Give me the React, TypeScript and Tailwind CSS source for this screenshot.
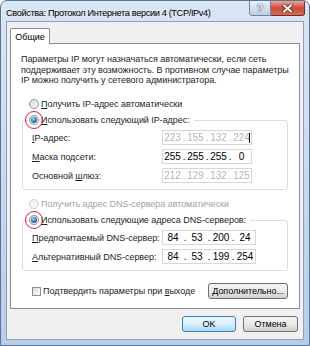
import { Fragment } from "react";

const FONT = "font-['Liberation_Sans',Arial,sans-serif]";

function Radio({ checked = false, disabled = false, marked = false }: { checked?: boolean; disabled?: boolean; marked?: boolean }) {
  return (
    <span className="relative flex items-center justify-center w-[10px] h-[10px] shrink-0">
      <span
        className={`flex items-center justify-center w-[10px] h-[10px] rounded-full border ${
          disabled
            ? "border-[#cfcfcf] bg-linear-to-br from-[#efefef] to-[#fbfbfb]"
            : "border-[#8a95a1] bg-linear-to-br from-[#d6d6d6] to-[#fdfdfd]"
        }`}
      >
        {checked && (
          <span className="w-[6px] h-[6px] rounded-full bg-[radial-gradient(circle_at_40%_35%,#a7dcf7,#2a6ea6_55%,#173f66)]" />
        )}
      </span>
      {marked && (
        <span className="absolute left-[-4px] top-[-4px] w-[18px] h-[18px] rounded-full border-[1.5px] border-[#d8262b]" />
      )}
    </span>
  );
}

function IpField({
  parts,
  width,
  cell,
  dot,
  blurred = false,
  caret = false,
}: {
  parts: string[];
  width: string;
  cell: string;
  dot: string;
  blurred?: boolean;
  caret?: boolean;
}) {
  return (
    <div className={`relative h-[15px] ${width} shrink-0 border border-[#d6d6d6] bg-white flex items-center px-[0.5px] text-[10px] leading-[13px]`}>
      <div className={`flex items-center ${blurred ? "text-[#b4b4b4] blur-[0.45px]" : "text-black"}`}>
        {parts.map((p, i) => (
          <Fragment key={i}>
            {i > 0 && <span className={`${dot} text-center`}>.</span>}
            <span className={`${cell} text-center`}>{p}</span>
          </Fragment>
        ))}
      </div>
      {caret && <span className="absolute right-[1px] top-[2px] w-px h-[10px] bg-black" />}
    </div>
  );
}

function Row({ label, children }: { label: React.ReactNode; children: React.ReactNode }) {
  return (
    <div className="flex items-center h-[15px]">
      <span className="w-[130px] shrink-0 whitespace-nowrap text-[#1e1e1e]">{label}</span>
      {children}
    </div>
  );
}

function Btn({ children, primary = false, width }: { children: React.ReactNode; primary?: boolean; width: string }) {
  return (
    <button
      className={`${width} h-[16px] shrink-0 rounded-[3px] border flex items-center justify-center text-[9px] leading-none text-black whitespace-nowrap ${
        primary
          ? "border-[#3c7fb1] bg-linear-to-b from-[#eaf6fd] via-[#d9f0fc] to-[#a7d9f5]"
          : "border-[#707070] bg-linear-to-b from-[#f2f2f2] via-[#ebebeb] to-[#cfcfcf]"
      }`}
    >
      {children}
    </button>
  );
}

export default function App() {
  return (
    <div
      className={`${FONT} w-[310px] h-[346px] flex flex-col border border-[#55759c] rounded-t-[7px] overflow-hidden bg-linear-to-b from-[#dbe6f3] via-[#c9daee] to-[#b9cde6] text-[9px] leading-[12px] tracking-[-0.05px]`}
    >
      {/* Title bar */}
      <div className="h-[20px] shrink-0 flex items-start justify-between pl-[5px] pr-[4px]">
        <span className="mt-[6px] text-[9.2px] leading-[12px] text-black whitespace-nowrap tracking-[-0.35px]">
          Свойства: Протокол Интернета версии 4 (TCP/IPv4)
        </span>
        <div className="flex -mt-px">
          <div className="w-[22px] h-[16px] rounded-bl-[3px] border border-[#6f85a3] bg-linear-to-b from-[#e9f0f8] via-[#d2dfee] to-[#bccee5] flex items-center justify-center">
            <span className="text-[11px] font-bold leading-none text-white [text-shadow:0_0_1px_#1f3250,0_0_1px_#1f3250]">?</span>
          </div>
          <div className="w-[34px] h-[16px] rounded-br-[3px] border border-l-0 border-[#7a2a22] bg-linear-to-b from-[#e8a596] via-[#c94a3c] to-[#d46a55] flex items-center justify-center">
            <svg width="11" height="9" viewBox="0 0 11 9">
              <path d="M2 1.5 L9 7.5 M9 1.5 L2 7.5" stroke="#5a1a14" strokeWidth="3.4" strokeLinecap="square" />
              <path d="M2 1.5 L9 7.5 M9 1.5 L2 7.5" stroke="#fff" strokeWidth="2" strokeLinecap="square" />
            </svg>
          </div>
        </div>
      </div>

      {/* Frame + client */}
      <div className="flex-1 flex px-[5px] pb-[5px]">
        <div className="flex-1 min-w-0 flex flex-col border border-[#8aa0bc] bg-[#f0f0f0]">
          {/* Tab strip */}
          <div className="pt-[6px] pl-[3px] flex">
            <div className="relative z-10 -mb-px w-[40px] h-[16px] border border-b-0 border-[#898c95] bg-white rounded-t-[2px] flex items-center justify-center text-black">
              Общие
            </div>
          </div>

          {/* Panel */}
          <div className="mx-[3px] min-w-0 border border-[#898c95] bg-white flex flex-col px-[11px] pt-[10px] pb-[9px] whitespace-nowrap">
            <p className="-ml-px leading-[10.5px] text-[#1e1e1e] h-[31.5px]">
              Параметры IP могут назначаться автоматически, если сеть
              <br />
              поддерживает эту возможность. В противном случае параметры
              <br />
              IP можно получить у сетевого администратора.
            </p>

            <div className="mt-[12.5px] h-[12px] flex items-center gap-[2px] ml-[7px] text-[#1e1e1e]">
              <Radio />
              <span>
                <u>П</u>олучить IP-адрес автоматически
              </span>
            </div>

            <fieldset className="mt-[4px] border border-[#d5dfe5] rounded-[3px] pl-[9px] pb-[6px]">
              <legend className="-ml-[4px] pl-[1px] pr-[4px] h-[12px] flex items-center gap-[2px] text-[#1e1e1e]">
                <Radio checked marked />
                <span>
                  <u>И</u>спользовать следующий IP-адрес:
                </span>
              </legend>
              <div className="pt-[4px] flex flex-col gap-[4px]">
                <Row label={<><u>I</u>P-адрес:</>}>
                  <IpField parts={["223", "155", "132", "224"]} width="w-[90px]" cell="w-[18px]" dot="w-[5px]" blurred caret />
                </Row>
                <Row label={<><u>М</u>аска подсети:</>}>
                  <IpField parts={["255", "255", "255", "0"]} width="w-[90px]" cell="w-[18px]" dot="w-[5px]" />
                </Row>
                <Row label={<>Основной <u>ш</u>люз:</>}>
                  <IpField parts={["212", "129", "132", "125"]} width="w-[90px]" cell="w-[18px]" dot="w-[5px]" blurred />
                </Row>
              </div>
            </fieldset>

            <div className="mt-[8px] h-[12px] flex items-center gap-[2px] ml-[7px] text-[#a3a3a3]">
              <Radio disabled />
              <span>Получить адрес DNS-сервера автоматически</span>
            </div>

            <fieldset className="mt-[4px] border border-[#d5dfe5] rounded-[3px] pl-[9px] pb-[6px]">
              <legend className="-ml-[4px] pl-[1px] pr-[4px] h-[12px] flex items-center gap-[2px] text-[#1e1e1e]">
                <Radio checked marked />
                <span>
                  <u>И</u>спользовать следующие адреса DNS-серверов:
                </span>
              </legend>
              <div className="pt-[4px] flex flex-col gap-[4px]">
                <Row label={<><u>П</u>редпочитаемый DNS-сервер:</>}>
                  <IpField parts={["84", "53", "200", "24"]} width="w-[94px]" cell="w-[19px]" dot="w-[5px]" />
                </Row>
                <Row label={<><u>А</u>льтернативный DNS-сервер:</>}>
                  <IpField parts={["84", "53", "199", "254"]} width="w-[94px]" cell="w-[19px]" dot="w-[5px]" />
                </Row>
              </div>
            </fieldset>

            <div className="mt-[12px] h-[16px] flex items-center justify-between ml-[10px]">
              <div className="flex items-center gap-[2px] text-[#1e1e1e]">
                <span className="w-[9px] h-[9px] border border-[#8f8f8f] bg-linear-to-br from-[#dcdcdc] to-[#fbfbfb]" />
                <span>
                  Подтвердить параметры при <u>в</u>ыходе
                </span>
              </div>
              <Btn width="w-[80px]">
                <span>
                  <u>Д</u>ополнительно...
                </span>
              </Btn>
            </div>
          </div>

          {/* Bottom buttons */}
          <div className="mt-[7px] flex justify-end gap-[7px] pr-[5px]">
            <Btn primary width="w-[54px]">
              OK
            </Btn>
            <Btn width="w-[55px]">Отмена</Btn>
          </div>
        </div>
      </div>
    </div>
  );
}
